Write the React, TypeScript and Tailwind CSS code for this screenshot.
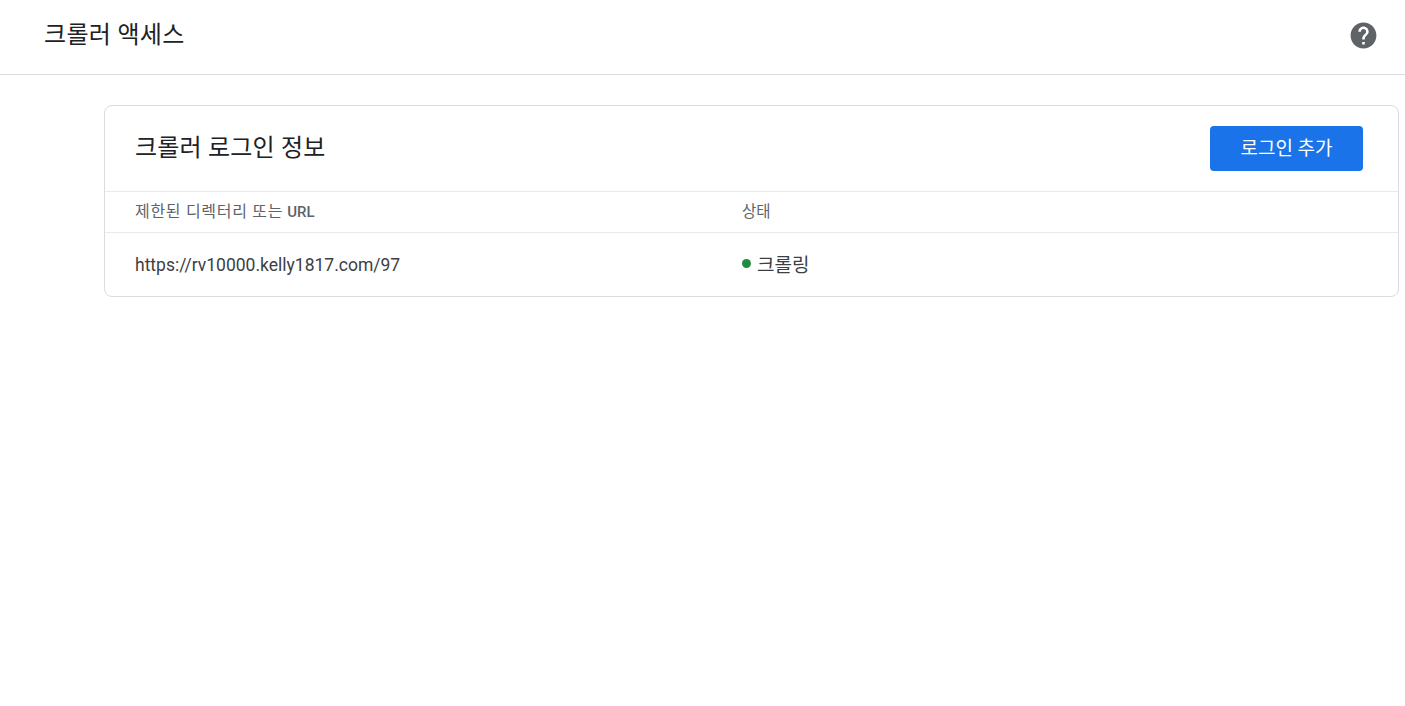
const font = "font-['Roboto','Noto_Sans_CJK_KR',sans-serif]";

export default function App() {
  return (
    <div className={`min-h-[706px] bg-white ${font}`}>
      <header className="flex h-[75px] items-center justify-between border-b border-[#dadce0] pb-1 pl-11 pr-[26px]">
        <h1 className="text-[24px] leading-7 tracking-[0.3px] text-[#202124]">크롤러 액세스</h1>
        <svg width="31" height="31" viewBox="0 0 24 24" className="fill-[#5f6368]">
          <path d="M12 2C6.48 2 2 6.48 2 12s4.48 10 10 10 10-4.48 10-10S17.52 2 12 2zm1 17h-2v-2h2v2zm2.07-7.75l-.9.92C13.45 12.9 13 13.5 13 15h-2v-.5c0-1.1.45-2.1 1.17-2.83l1.24-1.26c.37-.36.59-.86.59-1.41 0-1.1-.9-2-2-2s-2 .9-2 2H8c0-2.21 1.79-4 4-4s4 1.79 4 4c0 .88-.36 1.68-.93 2.25z" />
        </svg>
      </header>
      <main className="pl-[104px] pr-1.5 pt-[30px]">
        <section className="rounded-lg border border-[#dadce0]">
          <div className="flex h-[85px] items-center justify-between pl-[30px] pr-[35px]">
            <h2 className="pb-0.5 text-[24px] leading-7 tracking-[0.2px] text-[#202124]">크롤러 로그인 정보</h2>
            <button className="h-[45px] w-[153px] rounded bg-[#1a73e8] pt-0.5 text-[19px] text-white">로그인 추가</button>
          </div>
          <div className="grid h-[42px] grid-cols-[606px_1fr] items-center border-y border-[#e8eaed] pl-[30px] text-[#5f6368]">
            <div className="flex items-center gap-1">
              <span className="text-base tracking-[0.7px]">제한된 디렉터리 또는</span>
              <span className="text-[15px] font-medium">URL</span>
            </div>
            <div className="pl-px pt-0.5 text-[15.5px]">상태</div>
          </div>
          <div className="grid h-[63px] grid-cols-[606px_1fr] items-center pl-[30px] text-[#3c4043]">
            <div className="pt-0.5 text-[17.5px]">https://rv10000.kelly1817.com/97</div>
            <div className="flex items-center gap-[6px] pl-px text-[19px]">
              <span className="h-[9px] w-[9px] -translate-y-px rounded-full bg-[#1e8e3e]" />
              <span className="pt-1">크롤링</span>
            </div>
          </div>
        </section>
      </main>
    </div>
  );
}
